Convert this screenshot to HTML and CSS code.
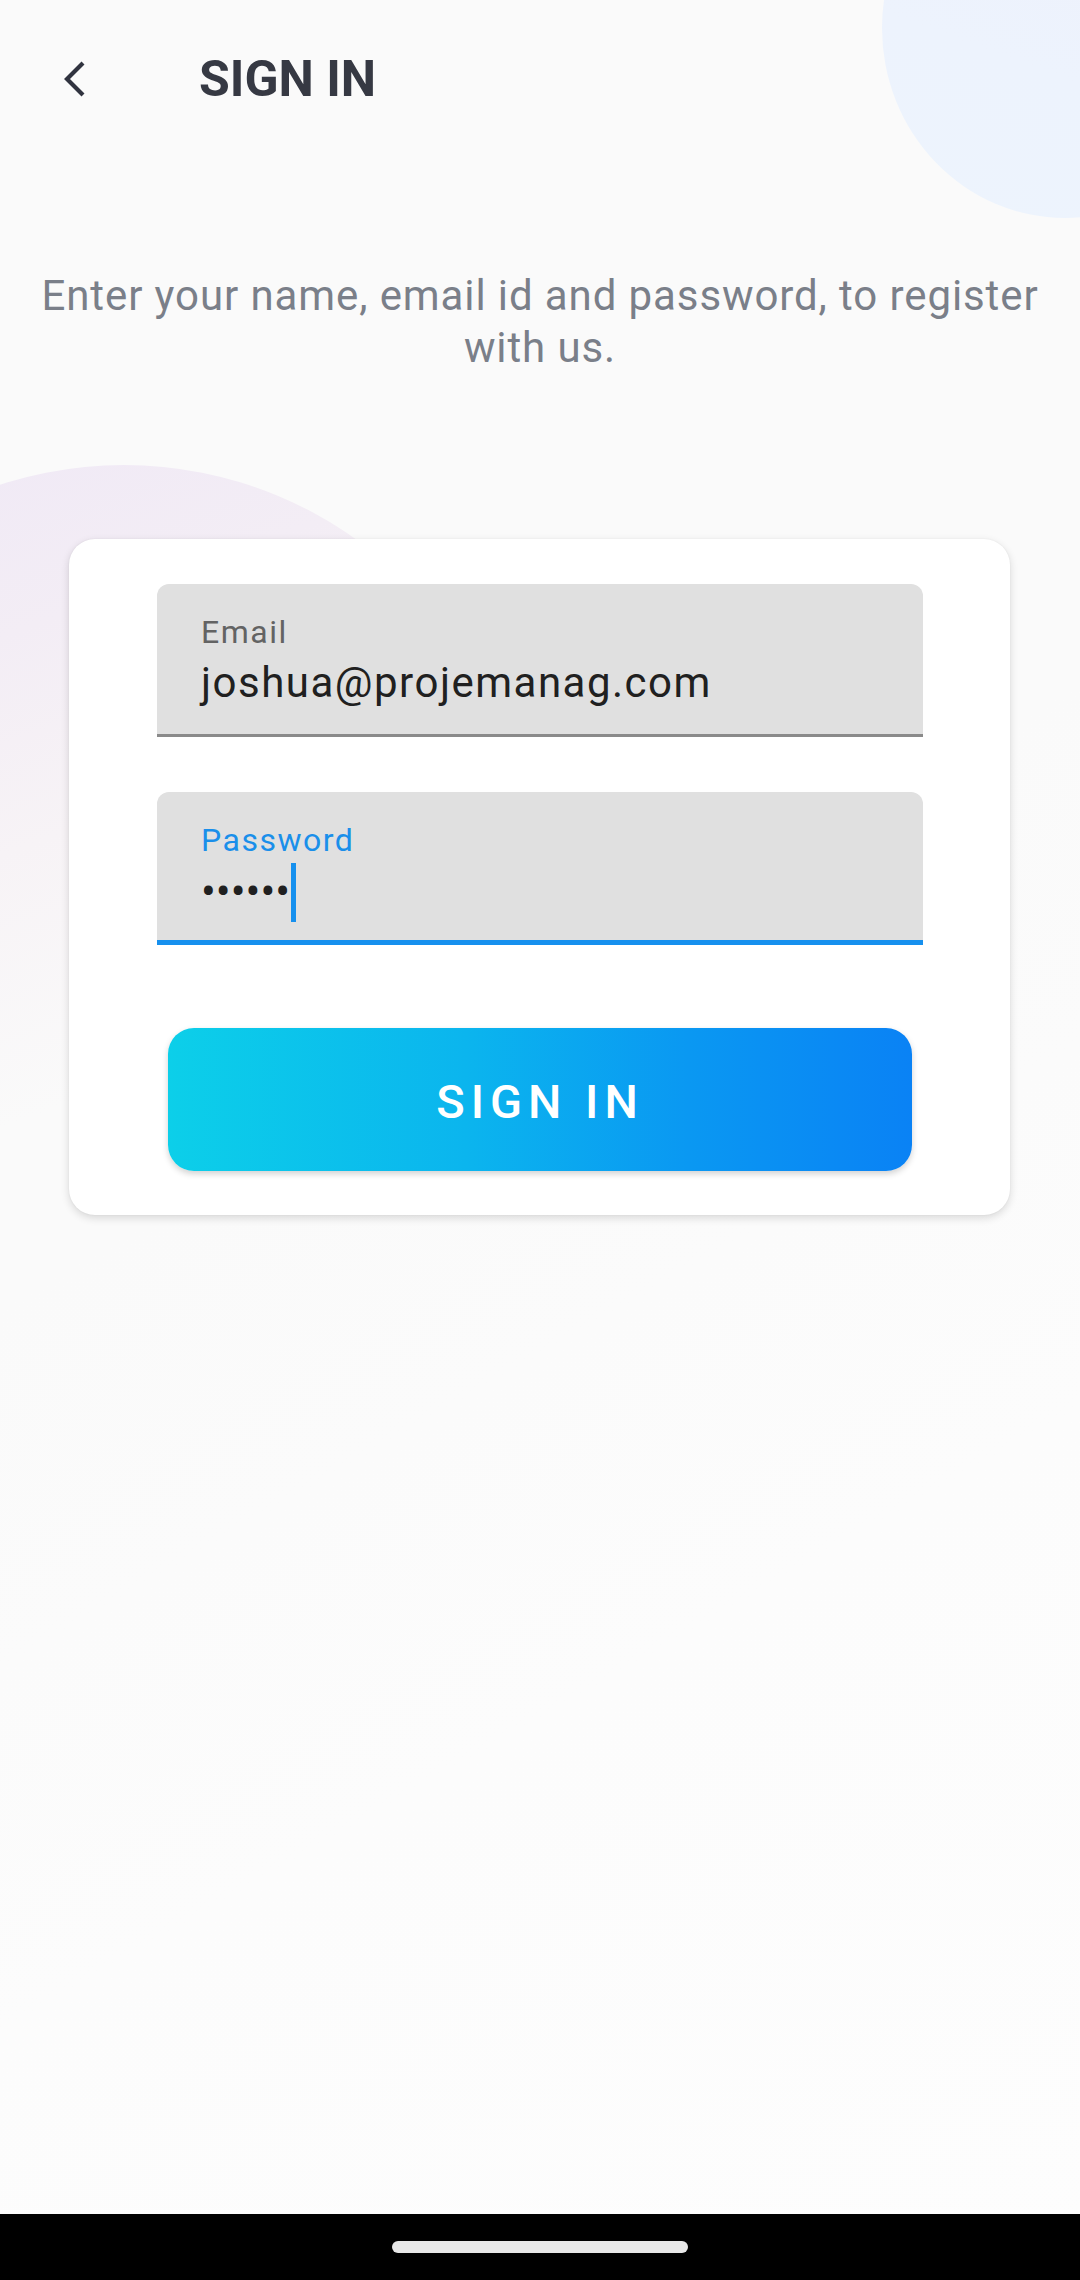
FILE: index.html
```html
<!DOCTYPE html>
<html lang="en">
<head>
<meta charset="utf-8">
<title>Sign In</title>
<link rel="stylesheet" href="styles.css">
</head>
<body>
<div class="screen">
  <div class="deco deco-top"></div>
  <div class="deco deco-left"></div>

  <header class="appbar">
    <button class="back" aria-label="Back">
      <svg width="30" height="40" viewBox="0 0 30 40"><polyline points="19,3 3,19 19,35" fill="none" stroke="#30333f" stroke-width="4.2" stroke-linecap="butt" stroke-linejoin="miter"/></svg>
    </button>
    <h1 class="title">SIGN IN</h1>
  </header>

  <p class="intro">Enter your name, email id and password, to register with us.</p>

  <section class="card">
    <div class="field">
      <div class="field-label">Email</div>
      <div class="field-value">joshua@projemanag.com</div>
    </div>
    <div class="field field-focused">
      <div class="field-label">Password</div>
      <div class="field-value password"><span class="dots">••••••</span><span class="cursor"></span></div>
    </div>
    <button class="primary">SIGN IN</button>
  </section>

  <div class="navbar"><div class="pill"></div></div>
</div>
</body>
</html>
```

FILE: styles.css
```css
* { box-sizing: border-box; }
html, body { margin: 0; padding: 0; }
body {
  font-family: Roboto, "Noto Sans", "Liberation Sans", sans-serif;
  background: #fafafa;
}
.screen {
  position: relative;
  width: 1080px;
  height: 2280px;
  overflow: hidden;
  display: flex;
  flex-direction: column;
  background: linear-gradient(150deg, #fafafa 0%, #fafafa 45%, #fcfcfc 70%, #fdfdfd 100%);
}
.deco {
  position: absolute;
  border-radius: 50%;
  pointer-events: none;
}
.deco-top {
  width: 366px;
  height: 380px;
  left: 882px;
  top: -162px;
  background: linear-gradient(200deg, #eef0fb 0%, #edf3fd 60%, #edf4fd 100%);
}
.deco-left {
  width: 800px;
  height: 800px;
  left: -276px;
  top: 465px;
  background: linear-gradient(160deg, #efe8f6 0%, #f3edf5 25%, #f7f3f6 45%, rgba(250,250,250,0) 70%);
}
.appbar {
  position: relative;
  height: 154px;
  padding-top: 6px;
  display: flex;
  align-items: center;
  flex-shrink: 0;
}
.back {
  border: 0;
  background: none;
  padding: 0;
  margin-left: 64px;
  width: 30px;
  height: 40px;
  display: flex;
}
.title {
  margin: 0 0 0 105px;
  font-size: 50px;
  font-weight: 700;
  color: #363943;
  line-height: 1;
  padding-bottom: 2px;
}
.intro {
  position: relative;
  margin: 116px 0 0;
  padding: 0 20px;
  text-align: center;
  font-size: 42px;
  line-height: 52px;
  letter-spacing: 0.9px;
  color: #7a7f89;
}
.card {
  position: relative;
  margin: 165px 70px 0 69px;
  background: #ffffff;
  border-radius: 26px;
  box-shadow: 0 3px 8px rgba(0,0,0,0.14), 0 0 2px rgba(0,0,0,0.06);
  padding: 45px 87px 44px 88px;
  display: flex;
  flex-direction: column;
}
.field {
  height: 153px;
  background: #e0e0e0;
  border-radius: 12px 12px 0 0;
  border-bottom: 3px solid #8a8a8a;
  padding: 28px 0 0 44px;
}
.field + .field { margin-top: 55px; }
.field-focused { border-bottom: 5px solid #1690ee; }
.field-label {
  font-size: 32px;
  line-height: 40px;
  color: #636363;
  letter-spacing: 1.5px;
}
.field-focused .field-label { color: #1a8fea; }
.field-value {
  margin-top: 6px;
  font-size: 42px;
  line-height: 50px;
  letter-spacing: 1.5px;
  color: #202020;
}
.password {
  display: flex;
  align-items: center;
  height: 60px;
  margin-top: 2px;
}
.dots {
  font-size: 44px;
  letter-spacing: 0;
  color: #202020;
}
.cursor {
  display: inline-block;
  width: 5px;
  height: 59px;
  margin-left: 1px;
  background: #1690ee;
}
.primary {
  margin: 83px 11px 0;
  height: 143px;
  border: 0;
  border-radius: 26px;
  background: linear-gradient(90deg, #0ccfe9 0%, #0bb5ee 40%, #0a98f2 70%, #0a82f5 100%);
  color: #ffffff;
  font-family: Roboto, "Noto Sans", sans-serif;
  font-size: 47px;
  font-weight: 500;
  letter-spacing: 6px;
  padding-top: 4px;
  box-shadow: 0 3px 6px rgba(0,0,0,0.18);
}
.navbar {
  margin-top: auto;
  height: 66px;
  background: #000;
  display: flex;
  justify-content: center;
  padding-top: 27px;
  position: relative;
}
.pill {
  width: 296px;
  height: 12px;
  border-radius: 6px;
  background: #e8e8e8;
}
```
